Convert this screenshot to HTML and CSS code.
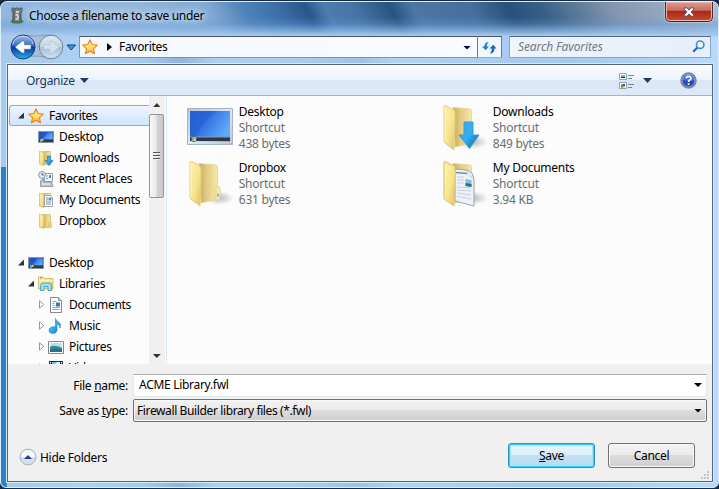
FILE: index.html
```html
<!DOCTYPE html>
<html lang="en">
<head>
<meta charset="utf-8">
<title>Choose a filename to save under</title>
<link rel="stylesheet" href="styles.css">
</head>
<body>
<svg class="defs" width="0" height="0" aria-hidden="true">
  <defs>
    <linearGradient id="gold" x1="0" y1="0" x2="1" y2="1"><stop offset="0" stop-color="#fff3ae"/><stop offset=".55" stop-color="#f6e48e"/><stop offset="1" stop-color="#e3c45c"/></linearGradient>
    <linearGradient id="goldback" x1="0" y1="0" x2="1" y2="0"><stop offset="0" stop-color="#c9ac55"/><stop offset=".4" stop-color="#e0c983"/><stop offset="1" stop-color="#f8e9a4"/></linearGradient>
    <linearGradient id="screen" x1="0" y1="0" x2="1" y2=".5"><stop offset="0" stop-color="#2a63d8"/><stop offset=".4" stop-color="#2b6de0"/><stop offset="1" stop-color="#62a8fb"/></linearGradient>
    <linearGradient id="bezel" x1="0" y1="0" x2="1" y2="1"><stop offset="0" stop-color="#8aa0c0"/><stop offset=".5" stop-color="#dde5ee"/><stop offset="1" stop-color="#92a3ba"/></linearGradient>
    <linearGradient id="arrow" x1="0" y1="0" x2="1" y2="1"><stop offset="0" stop-color="#2fa9ee"/><stop offset=".5" stop-color="#35b0ee"/><stop offset="1" stop-color="#075f9f"/></linearGradient>
    <linearGradient id="orange" x1="0" y1="0" x2="0" y2="1"><stop offset="0" stop-color="#ffdf64"/><stop offset=".5" stop-color="#ffe774"/><stop offset="1" stop-color="#ff9e17"/></linearGradient>
    <linearGradient id="backblue" x1="0" y1="0" x2="0" y2="1"><stop offset="0" stop-color="#9fbcec"/><stop offset=".46" stop-color="#386bc5"/><stop offset=".5" stop-color="#0b3597"/><stop offset="1" stop-color="#24b1f4"/></linearGradient>
    <linearGradient id="fwd" x1="0" y1="0" x2="0" y2="1"><stop offset="0" stop-color="#dde8f3"/><stop offset=".48" stop-color="#c6d6e5"/><stop offset=".52" stop-color="#a9c0d7"/><stop offset="1" stop-color="#cfe2f2"/></linearGradient>
    <radialGradient id="shade"><stop offset="0" stop-color="#777" stop-opacity=".5"/><stop offset="1" stop-color="#777" stop-opacity="0"/></radialGradient>
    <symbol id="star" viewBox="0 0 16 16"><path d="M8 .8 10.1 5.5 15.3 6.1 11.5 9.6 12.5 14.8 8 12.3 3.4 14.8 4.5 9.6.7 6.1 5.9 5.5Z" fill="url(#orange)" stroke="#ec831e" stroke-width="1.1" stroke-linejoin="round"/></symbol>
    <symbol id="monitor" viewBox="0 0 16 16"><path d="M.5 2.5h15v11H.5z" fill="#2f58b5" stroke="#8796aa"/><path d="M1.5 3.5h13v7h-13z" fill="url(#screen)"/><path d="M1.5 3.5h8L4 10.500H1.500z" fill="#183ea6" opacity=".5"/><path d="M1 10.500h14v2.500H1z" fill="#2c3b50"/><path d="M2 10h2v2H2z" fill="#65bf6b"/><path d="M4 10h1.500v2H4z" fill="#f6c63c"/><path d="M2 12h2v1H2z" fill="#4aa6ff"/></symbol>
    <symbol id="folder" viewBox="0 0 16 16"><path d="M5 1.500h7.500v13H5z" fill="url(#goldback)" stroke="#cfb568" stroke-width=".7"/><path d="M1.500 1.200 6 2.500v13l-4.500-1.300z" fill="url(#gold)" stroke="#d2b661" stroke-width=".7"/></symbol>
    <symbol id="folder-down" viewBox="0 0 16 16"><use href="#folder"/><path d="M9.500 6h3v4.500H15L11 15.500 7 10.500h2.500z" fill="url(#arrow)" stroke="#2079b8" stroke-width=".7"/></symbol>
    <symbol id="folder-doc" viewBox="0 0 16 16"><use href="#folder"/><path d="M6.500 3.500h6l2 2v9h-8z" fill="#f8fafc" stroke="#8c949e" stroke-width=".8"/><path d="M8 6h2M8 8h2M8 10h5M8 12h5" stroke="#87919e"/><path d="M10.500 5.500h3v3h-3z" fill="#4e91dc"/></symbol>
    <symbol id="folder-box" viewBox="0 0 16 16"><use href="#folder"/><path d="M10.500 9.500h3v5h-3z" fill="#f3e08a" stroke="#d8bc62" stroke-width=".7"/><path d="M11.500 12h1v1h-1z" fill="#569bd5"/></symbol>
    <symbol id="recent" viewBox="0 0 16 16"><path d="M6.500 2.500h8v8h-8z" fill="#f4f8fb" stroke="#929daa"/><path d="M8 5h2M8 7.500h2" stroke="#7898bb"/><path d="M11 4h2v3h-2z" fill="#3c86e5"/><circle cx="4" cy="4" r="3.400" fill="#e8edef" stroke="#8b9599"/><path d="M4 2v2h2" fill="none" stroke="#5d6871"/><path d="M2.500 9.500 5.500 8v3h8l1.500 4.500H2.500z" fill="#bbc5ca" stroke="#87949b" stroke-width=".8"/><path d="M4 13h8" stroke="#f5f8f9"/></symbol>
    <symbol id="libraries" viewBox="0 0 16 16"><path d="M.5 2V1h5l1 1.500h8.500v10.500H.5z" fill="url(#gold)" stroke="#c9ae54" stroke-width=".8"/><path d="M1 4.500h14" stroke="#fff2ad"/><path d="M2 2h2" stroke="#4eac54"/><path d="M2.500 14.500v-5Q2.500 7 5 7h6q2.500 0 2.500 2.500v5H10v-4H6v4z" fill="#a4daf2" stroke="#4ba8d1"/></symbol>
    <symbol id="document" viewBox="0 0 16 16"><path d="M2.500.5h8l3 3v12h-11z" fill="#fff" stroke="#858b92"/><path d="M10.500.5v3h3" fill="#dbe2e9" stroke="#858b92"/><path d="M4.500 4.500h4M4.500 6.500h2M4.500 8.500h2M4.500 10.500h7M4.500 12.500h7" stroke="#929cc0"/><path d="M8 5.500h4v4H8z" fill="#3478c8"/></symbol>
    <symbol id="music" viewBox="0 0 16 16"><path d="M7.500.5c1.400 3.800 6.800 3.700 4.500 9.500.1-2.700-1.300-3.600-3-4v6.500q-.5 3-4.300 3T1 12.500t3-3.600l3.500-.3z" fill="url(#arrow)" stroke="#3085c4" stroke-width=".6"/></symbol>
    <symbol id="picture" viewBox="0 0 16 16"><path d="M.5 2.500h15v12H.5z" fill="#fff" stroke="#85898c"/><path d="M2 4h12v9H2z" fill="#b2e3f5"/><path d="M2 8q4-3 12 1v4H2z" fill="#3c8974"/><path d="M2 11q6-2 12-1v3H2z" fill="#256da4"/></symbol>
    <symbol id="video" viewBox="0 0 16 16"><path d="M1 1h14v14H1z" fill="#252d38"/><path d="M4 2h8v12H4z" fill="#5bc4e8"/><path d="M4 7 9 2h3v2L7 9z" fill="#d7f3fb"/><path d="M2.500 2v13M13.500 2v13" stroke="#f3f5f6" stroke-dasharray="1.500 1.500"/></symbol>
    <symbol id="folder-lg" viewBox="0 0 48 48"><ellipse cx="32" cy="38" rx="15" ry="7" fill="url(#shade)"/><path d="M12 3.500 28.500 5q2 0 2 2V39L14 43z" fill="url(#goldback)" stroke="#e2d08c" stroke-width=".8"/><path d="M3 2.500Q3 1 4.500 1.500L13 6q1 1 1 3v17l-1 2v18L4 39q-1-1-1-2.500z" fill="url(#gold)" stroke="#e0cb78"/><path d="M4 3v34" stroke="#fff7c7"/></symbol>
  </defs>
</svg>
<main class="window">
  <header class="titlebar">
    <svg class="app-icon" viewBox="0 0 14 17"><ellipse cx="7" cy="14.500" rx="6.500" ry="2" fill="#318f35"/><path d="M2 1h2v1.500h1.500V1h3v1.500H10V1h2v4l-1 1 .5 9h-9L3 6 2 5z" fill="#7d8588" stroke="#45494b" stroke-width=".7"/><path d="M4 3v11" stroke="#4c5152"/><path d="M6 5h3M5.500 8h3M7 10h2M5.500 12h3" stroke="#e7ebec" stroke-width="1.500"/><path d="M10 5v9" stroke="#4c5152"/></svg>
    <h1>Choose a filename to save under</h1>
    <button class="close" aria-label="Close"><svg viewBox="0 0 12 10"><path d="M1.200.8h3L6 3 7.800.8h3v1.400L8.200 5l2.600 2.800v1.400h-3L6 7 4.200 9.200h-3V7.800L3.800 5 1.200 2.200z" fill="#f4f4f4" stroke="#535267"/></svg></button>
  </header>
  <nav class="navbar">
    <svg class="history" viewBox="0 0 70 28"><path d="M13 2Q26 4 38 2 51 1 53 14 51 27 39 25q-13-4-26 0Z" fill="#a9c0dd" stroke="#849ab9"/><circle cx="14" cy="14" r="12" fill="url(#backblue)" stroke="#24406e"/><path d="M3.700 11Q6 3.500 14 3.300T24.300 11" fill="none" stroke="#c6d8f3"/><path d="M6 14.200 13.200 8h2.200v3.800H22v4.400h-6.600v3.900h-2.200z" fill="#fff" stroke="#476bac" stroke-width=".6"/><circle cx="42" cy="14" r="11.800" fill="url(#fwd)" stroke="#71839b"/><path d="M50 14.200 43 8h-2v3.800h-6.500v4.400H41v3.900h2z" fill="#d4e2ee" stroke="#a9bfd2" stroke-width=".7"/><path d="M58 12h8.500L62.200 17z" fill="#3a9ad3" stroke="#173c76"/></svg>
    <div class="address"><svg class="star"><use href="#star"/></svg><i class="crumb"></i><span>Favorites</span><i class="down navy"></i></div>
    <button class="refresh" aria-label="Refresh"><svg viewBox="0 0 16 16"><path d="M0 7h2.500Q2.500 2 7 2 5 3.500 5.200 7H7.500L3.800 11z" fill="#2482cd"/><path d="M8 9 12 5l3.500 4h-2.300q0 5-4.700 5.500Q10.700 12.500 10.500 9z" fill="#2460b8"/></svg></button>
    <div class="search"><span>Search Favorites</span><svg viewBox="0 0 13 13"><path d="M6 7 1.200 11.800" stroke="#286ac0" stroke-width="2.200"/><circle cx="8.200" cy="4.700" r="3.700" fill="#f9fdff" stroke="#3c8fd8" stroke-width="1.700"/></svg></div>
  </nav>
  <section class="client">
    <div class="toolbar">
      <span class="organize">Organize</span><i class="down slate"></i>
      <svg class="views" viewBox="0 0 17 16"><path d="M1.500.5h7v6h-7zM1.500 9.500h7v6h-7z" fill="#fff" stroke="#92a0b5"/><path d="M3 2h4v2H3z" fill="#5bbad0"/><path d="M3 4h4v1H3z" fill="#122f3e"/><path d="M3 11h2v2H3z" fill="#dc7741"/><path d="M5 11h2v2H5z" fill="#245fc0"/><path d="M3 13h2v1.500H3z" fill="#2b8a4b"/><path d="M5 13h2v1.500H5z" fill="#eeb629"/><path d="M10 2.500h6M10 5.500h4M10 11.500h6M10 14.500h4" stroke="#6f819c"/></svg><i class="down slate"></i>
      <svg class="help" viewBox="0 0 17 17"><circle cx="8.500" cy="8.500" r="7.500" fill="#2548b4" stroke="#77869e" stroke-width="1.500"/><path d="M2.300 8A6.200 6.200 0 0 1 14.700 8Q9 10 2.300 8" fill="#4a72cf"/><circle cx="8.500" cy="8.500" r="6.300" fill="none" stroke="#c2d2ef" stroke-width=".6"/><path d="M6.200 6.300Q6.400 4.300 8.600 4.300T10.900 6.200Q10.900 7.400 9.700 8.100 8.600 8.700 8.600 10" fill="none" stroke="#fff" stroke-width="1.700"/><path d="M7.700 11.200h1.800V13H7.700z" fill="#fff"/></svg>
    </div>
    <div class="browser">
      <aside class="tree">
        <div class="row selected"><i class="open"></i><svg><use href="#star"/></svg><span>Favorites</span></div>
        <div class="row l1"><svg><use href="#monitor"/></svg><span>Desktop</span></div>
        <div class="row l1"><svg><use href="#folder-down"/></svg><span>Downloads</span></div>
        <div class="row l1"><svg><use href="#recent"/></svg><span>Recent Places</span></div>
        <div class="row l1"><svg><use href="#folder-doc"/></svg><span>My Documents</span></div>
        <div class="row l1"><svg><use href="#folder-box"/></svg><span>Dropbox</span></div>
        <div class="row root"><i class="open"></i><svg><use href="#monitor"/></svg><span>Desktop</span></div>
        <div class="row sub"><i class="open"></i><svg><use href="#libraries"/></svg><span>Libraries</span></div>
        <div class="row leaf"><svg class="closed" viewBox="0 0 6 9"><path d="M.5.8v7.400L4.800 4.500z"/></svg><svg><use href="#document"/></svg><span>Documents</span></div>
        <div class="row leaf"><svg class="closed" viewBox="0 0 6 9"><path d="M.5.8v7.400L4.800 4.500z"/></svg><svg><use href="#music"/></svg><span>Music</span></div>
        <div class="row leaf"><svg class="closed" viewBox="0 0 6 9"><path d="M.5.8v7.400L4.800 4.500z"/></svg><svg><use href="#picture"/></svg><span>Pictures</span></div>
        <div class="row leaf"><svg class="closed" viewBox="0 0 6 9"><path d="M.5.8v7.400L4.800 4.500z"/></svg><svg><use href="#video"/></svg><span>Videos</span></div>
      </aside>
      <div class="scrollbar"><i class="up"></i><div class="thumb"><b></b><b></b><b></b></div><i class="down gray"></i></div>
      <div class="files">
        <article><svg viewBox="0 0 48 48"><path d="M.5 4.500h45v36H.5z" fill="url(#bezel)" stroke="#a6b4c8"/><path d="M2 6h42v33H2z" fill="none" stroke="#e4e9ef"/><path d="M3 7h40v30H3z" fill="url(#screen)"/><path d="M3 7h28Q15 17 9 33H3z" fill="#153f9f" opacity=".15"/><path d="M3 33h40v4H3z" fill="#2a384d"/><path d="M3 33h40" stroke="#8699b6"/><circle cx="7" cy="35" r="3" fill="#347099"/><path d="M5 33h2v2H5z" fill="#ed8154"/><path d="M7 33h2v2H7z" fill="#9bd35e"/><path d="M5 35h2v2H5z" fill="#55b8f0"/><path d="M7 35h2v2H7z" fill="#f5d356"/></svg><div><h2>Desktop</h2><p>Shortcut</p><p>438 bytes</p></div></article>
        <article><svg viewBox="0 0 48 48"><use href="#folder-lg"/><path d="M23 18h9v13h6L28.500 44.500 18 31h5z" fill="url(#arrow)" stroke="#3a9ad4" stroke-linejoin="round"/></svg><div><h2>Downloads</h2><p>Shortcut</p><p>849 bytes</p></div></article>
        <article><svg viewBox="0 0 48 48"><use href="#folder-lg"/><path d="M29 28q0-1 1-1h2q1 0 1 1v11l-4 1.500z" fill="#fbedaa" stroke="#decb80" stroke-width=".8"/><path d="M30.300 37v-3.500h1.500v3z" fill="#6aa9da"/></svg><div><h2>Dropbox</h2><p>Shortcut</p><p>631 bytes</p></div></article>
        <article><svg viewBox="0 0 48 48"><use href="#folder-lg"/><path d="M14 9 26 10q7 2 7 11v25L14 41z" fill="#eef1f8" stroke="#929ca7" stroke-width=".9"/><path d="M15 12.500l11 1" stroke="#5c9a98" stroke-width="1.700"/><path d="M16 17h7M16 20h7M16 23h7M16 27l14 1M16 30l14 1M16 33l14 2M16 36l14 3" stroke="#c6cfdf"/><path d="m24.500 19 6 1v7l-6-1z" fill="#79c1ea"/><path d="m24.500 23 6 1v3l-6-1z" fill="#25796d"/><path d="m25 10 8 9-6-4z" fill="#fff" stroke="#a8b2bb" stroke-width=".5"/><path d="M3 2 13 6q1 1 1 3v17l-1 2v18L3 39z" fill="url(#gold)" stroke="#e0cb78"/></svg><div><h2>My Documents</h2><p>Shortcut</p><p>3.94 KB</p></div></article>
      </div>
    </div>
    <form class="form">
      <label>File <u>n</u>ame:</label><div class="field name"><span>ACME Library.fwl</span><i class="down"></i></div>
      <label>Save as <u>t</u>ype:</label><div class="field type"><span>Firewall Builder library files (*.fwl)</span><i class="down"></i></div>
    </form>
    <footer>
      <svg class="hide-icon" viewBox="0 0 18 18"><circle cx="9" cy="9" r="7.900" fill="#d8dfeb" stroke="#a7b3c9"/><path d="M2 9a7 7 0 0 1 14 0z" fill="#f7f9fc"/><path d="M5 11 9 7l4 4z" fill="#263f87"/></svg>
      <span class="hide">Hide Folders</span>
      <button type="button" class="save"><u>S</u>ave</button>
      <button type="button" class="cancel">Cancel</button>
    </footer>
    <svg class="grip" viewBox="0 0 8 8"><path d="M6 0h2v2H6zM3 3h2v2H3zM6 3h2v2H6zM0 6h2v2H0zM3 6h2v2H3zM6 6h2v2H6z" fill="#c3c3c3"/></svg>
  </section>
</main>
</body>
</html>
```
FILE: styles.css
```css
* { box-sizing: border-box; }
body { margin: 0; width: 719px; height: 489px; overflow: hidden; background: #172b43; font: 12px/16px "Noto Sans", "Open Sans", sans-serif; letter-spacing: -.3px; color: #000; }
h1, h2, p { margin: 0; font-size: inherit; font-weight: normal; }
button { margin: 0; padding: 0; font: inherit; letter-spacing: inherit; color: inherit; }
svg { display: block; flex: none; }
i, b { display: block; flex: none; }
span, h1, h2, label { white-space: nowrap; }
.defs { position: absolute; }

.window {
  display: flex; flex-direction: column; height: 487px; margin-top: 1px; padding: 0 6px 5px; border: 1px solid #d9edfc; border-radius: 7px 7px 6px 6px;
  background:
    linear-gradient(180deg, transparent 15px, #5f9ad755 22px, #90bbe8aa 28px, #a9caec 34px, transparent 35px),
    linear-gradient(64deg, #92b6dc 0 20%, #82a9d3 30%, #4f82b8 35%, #3a6ca3 40%, #28568a 43.500%, #4d7cae 46%, #4774a5 50%, #28547f 55%, #4c77a5 58%, #45709d 66%, #285079 71%, #3a6288 76%, #8195ae 85%, #a9bdd6) 0 0 / 100% 34px no-repeat,
    linear-gradient(90deg, #2784c0 0 6px, transparent 6px) 0 165px / 100% 320px no-repeat,
    linear-gradient(90deg, #a9c9ea, #add0f5 12%, #a6c9ef 20%, #8fb4df 25%, #add0f5 30%, #aaccf1 42%, #9fc2e8 50%, #b1d2f5 55%, #a3c9ef 80%, #b9dafb);
}
.titlebar { display: flex; height: 32px; padding-left: 3px; }
.app-icon { width: 14px; height: 17px; margin-top: 5px; }
.titlebar h1 { margin: 6px 0 0 5px; text-shadow: 0 0 7px #d9e9fb, 0 0 10px #c4daf2, 0 0 12px #c4daf2; }
.close { display: grid; place-items: center; width: 48px; height: 20px; margin: 0 -1px 0 auto; border: 1px solid #4b2532; border-top: 0; border-radius: 0 0 5px 5px; box-shadow: inset 0 0 0 1px #eab5a9, 0 0 2px #fff; background: linear-gradient(#df9c92, #c86d60 44%, #a92716 48%, #c74c2d); }
.close svg { width: 12px; height: 10px; }
.navbar { display: flex; align-items: center; height: 26px; }
.history { width: 70px; height: 28px; margin-left: 2px; }
.address { display: flex; align-items: center; width: 399px; height: 22px; padding-bottom: 1px; border: 1px solid #8095ad; border-top-color: #47556a; background: linear-gradient(90deg, #f4f9fe, #f8fbfe); }
.star { width: 16px; height: 16px; margin-left: 2px; }
.crumb { margin: 0 7px 0 9px; border: solid transparent; border-width: 4px 0 4px 5px; border-left-color: #000; }
.down { width: 8px; height: 4px; background: #000; clip-path: polygon(0 0, 100% 0, 50% 100%); }
.down.navy { margin: 2px 6px 0 auto; background: #000050; }
.down.slate { width: 9px; height: 5px; background: #203a65; }
.refresh { display: grid; place-items: center; width: 25px; height: 22px; margin-left: -1px; border: 1px solid #8095ad; border-color: #47556a #697c92 #9caec2; background: #f1f7fe; }
.refresh svg { width: 15px; height: 15px; }
.search { display: flex; align-items: center; width: 202px; height: 22px; margin-left: 7px; padding: 0 5px 1px 8px; border: 1px solid #8ba5c2; border-top-color: #536b87; background: linear-gradient(90deg, #edf4fc, #e7effb); color: #737980; font-style: italic; letter-spacing: -.13px; }
.search svg { width: 13px; height: 13px; margin-left: auto; }

.client { position: relative; display: flex; flex-direction: column; flex: 1; margin-top: 4px; border: 1px solid #52667e; box-shadow: 0 0 0 1px #d3e9fc; background: #f0f0f0; width: 706px; }
.toolbar { display: flex; align-items: center; flex: none; height: 31px; padding: 1px 15px 0 18px; border-bottom: 1px solid #a0b1c9; background: linear-gradient(#fcfeff, #eaf3fd 49%, #dce6f4 50%, #dde9f7); color: #1e395b; }
.toolbar .organize + .down { margin-left: 5px; }
.views { width: 17px; height: 16px; margin: 0 8px 0 auto; }
.help { width: 17px; height: 17px; margin-left: 28px; }
.browser { display: flex; flex: none; height: 268px; overflow: hidden; background: #fcfcfc; }
.tree { width: 141px; height: 268px; padding-top: 9px; overflow: hidden; }
.row { display: flex; align-items: center; height: 21px; padding-left: 10px; }
.row svg { width: 16px; height: 16px; }
.row span { margin-left: 5px; }
.selected { margin-left: 1px; padding-left: 8px; border: 1px solid #84acdd; border-right: 0; border-radius: 3px 0 0 3px; background: linear-gradient(#eef6ff, #cfe4fe); }
.open { width: 6px; height: 6px; margin-right: 4px; background: #333; clip-path: polygon(100% 0, 100% 100%, 0 100%); }
.l1 { padding-left: 30px; }
.root { margin-top: 21px; }
.sub { padding-left: 20px; }
.leaf { padding-left: 31px; }
.row .closed { width: 6px; height: 9px; margin-right: 3px; fill: #fff; stroke: #999; }
.scrollbar { display: flex; flex-direction: column; align-items: center; width: 16px; padding: 7px 0 6px; background: #f0f0f0; }
.up { width: 7px; height: 4px; background: #333; clip-path: polygon(50% 0, 100% 100%, 0 100%); }
.thumb { display: flex; flex-direction: column; align-items: center; justify-content: center; gap: 1px; width: 15px; height: 84px; margin-top: 7px; border: 1px solid #969696; border-radius: 2px; background: linear-gradient(90deg, #fafafa, #e8e8e8 48%, #d2d2d2 55%, #c8c8cb); }
.thumb b { width: 7px; height: 2px; border-top: 1px solid #555; background: #eee; }
.gray { margin-top: auto; background: #333; }
.files { display: grid; grid-template: 56px 56px / 254px 254px; margin-left: 1px; padding: 8px 0 0 20px; border-left: 1px solid #dae7f5; width: 547px; letter-spacing: -.25px; }
.files article { display: flex; }
.files svg { width: 48px; height: 48px; }
.files article > div { margin-left: 4px; }
.files p { color: #6d6d6d; }

.form { display: grid; grid-template: 23px 23px / 120px 574px; gap: 2px 5px; margin-top: 10px; }
.form label { text-align: right; padding-top: 4px; }
.field { display: flex; align-items: center; height: 23px; padding: 0 4px 1px 5px; border: 1px solid #e3e9ef; border-top-color: #abadb3; background: #fff; }
.field .down { margin-left: auto; }
.field.type { padding: 0 4px 0 3px; border: 1px solid #707070; border-radius: 2px; box-shadow: inset 0 0 0 1px #f8f8f8; background: linear-gradient(#f2f2f2, #ebebeb 48%, #dcdcdc 50%, #cfcfcf); letter-spacing: -.38px; }
footer { display: flex; height: 26px; margin: 21px 17px 0 11px; }
.hide-icon { width: 18px; height: 18px; margin-top: 5px; }
.hide { margin: 7px 0 0 3px; }
footer button { width: 87px; height: 25px; border: 1px solid #707070; border-radius: 3px; box-shadow: inset 0 0 0 1px #fafafa; background: linear-gradient(#f3f3f3, #ebebeb 48%, #dcdcdc 50%, #cfcfcf); }
footer .save { margin: 0 13px 0 auto; border-color: #3590bf; box-shadow: inset 0 0 0 1px #2fcffb, inset 0 0 1px 2px #9fe6fb; background: linear-gradient(#e9f5fc, #d9effa 48%, #c2e1f2 50%, #b7dcf0); }
.grip { position: absolute; right: 3px; bottom: 2px; width: 8px; height: 8px; }
```
